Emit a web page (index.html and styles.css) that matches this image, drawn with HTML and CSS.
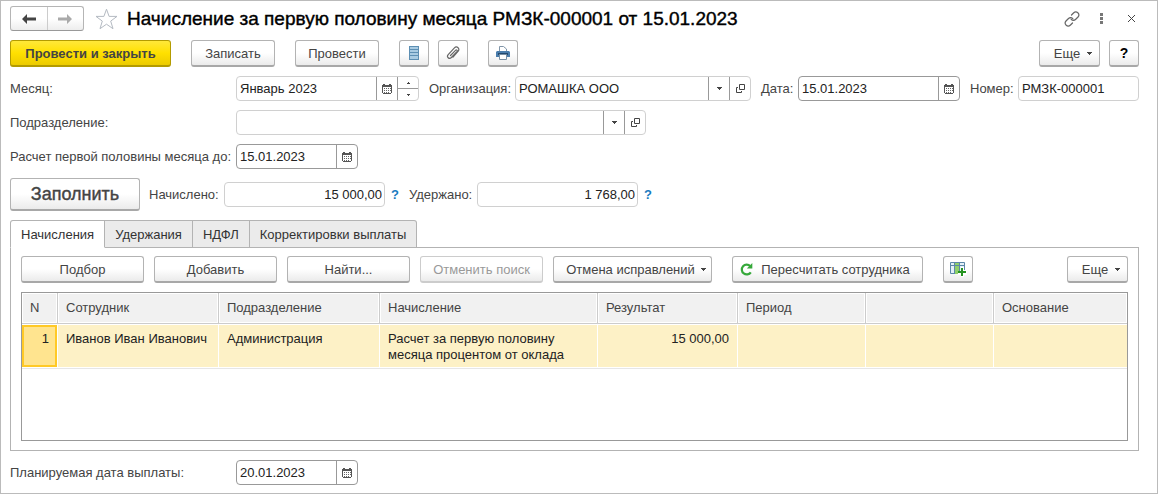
FILE: index.html
```html
<!DOCTYPE html>
<html lang="ru">
  <head>
    <meta charset="UTF-8" />
    <meta name="viewport" content="width=device-width, initial-scale=1.0" />
    <title>Начисление за первую половину месяца</title>
    <link rel="stylesheet" href="styles.css">
  </head>
  <body>
    <svg class="sprite" width="0" height="0" aria-hidden="true">
      <symbol id="calendar" viewBox="0 0 10 10">
        <path d="M0 1h1v-1h2v1h4v-1h2v1h1v8h-1v1h-8v-1h-1z" fill="#555" />
        <path d="M1 3h8v6h-8z" fill="#fff" />
        <path d="M2 4h1v1h-1zM4 4h1v1h-1zM6 4h1v1h-1zM2 6h1v1h-1zM4 6h1v1h-1zM6 6h1v1h-1zM2 8h1v1h-1zM4 8h1v1h-1zM6 8h1v1h-1zM8 4h1v1h-1zM8 6h1v1h-1z" fill="#666" />
      </symbol>
      <symbol id="open" viewBox="0 0 9 9">
        <path d="M3.500 .5h5v5h-5zM2 3.500h-1.500v5h5v-1.500" fill="none" stroke="#444" />
      </symbol>
      <symbol id="caret" viewBox="0 0 5 3">
        <path d="M0 0h5v1h-1v1h-1v1h-1v-1h-1v-1h-1z" fill="#444" />
      </symbol>
    </svg>

    <main class="window">
      <header class="title-bar">
        <div class="history">
          <button type="button" aria-label="Назад">
            <svg width="14" height="10" viewBox="0 0 14 10"><path d="M0 5l5-5v3.500h9v3h-9v3.500z" fill="#444" /></svg>
          </button>
          <button type="button" aria-label="Вперед">
            <svg width="14" height="10" viewBox="0 0 14 10"><path d="M14 5l-5-5v3.500h-9v3h9v3.500z" fill="#aaa" /></svg>
          </button>
        </div>
        <button type="button" class="icon-button" aria-label="В избранное">
          <svg width="23" height="22" viewBox="0 0 23 22"><path d="M11.500 1.200l2.600 7.200h7.900l-6.300 4.700 2.300 7.600-6.500-4.500-6.500 4.500 2.300-7.600-6.300-4.700h7.900z" fill="none" stroke="#b4bac2" /></svg>
        </button>
        <h1>Начисление за первую половину месяца РМЗК-000001 от 15.01.2023</h1>
        <div class="window-actions">
          <button type="button" class="icon-button icon-link" aria-label="Получить ссылку">
            <svg width="16" height="16" viewBox="0 0 16 16" fill="none" stroke="#666" stroke-width="1.200" stroke-linecap="round"><path d="M7.500 4l2-2c3-3 7 1 4.500 4l-2.500 2.500c-1.500 1.500-3.500 1.200-4.500-.5" /><path d="M8.500 12l-2 2c-3 3-7-1-4.500-4l2.500-2.500c1.500-1.500 3.500-1.200 4.500.5" /></svg>
          </button>
          <button type="button" class="icon-button" aria-label="Меню">
            <svg width="3" height="11" viewBox="0 0 3 11"><path d="M0 0h3v3h-3zM0 4h3v3h-3zM0 8h3v3h-3z" fill="#777" /></svg>
          </button>
          <button type="button" class="icon-button" aria-label="Закрыть">
            <svg width="7" height="7" viewBox="0 0 7 7"><path d="M0 0l7 7M7 0l-7 7" stroke="#444" /></svg>
          </button>
        </div>
      </header>

      <div class="commands">
        <button type="button" class="btn btn-primary">Провести и закрыть</button>
        <button type="button" class="btn btn-save">Записать</button>
        <button type="button" class="btn btn-save">Провести</button>
        <div class="btn-pair">
          <button type="button" class="btn btn-icon" aria-label="Движения документа">
            <svg width="10" height="14" viewBox="0 0 10 14"><path d="M0 0h10v14h-10z" fill="#5d8fb3" /><path d="M1 1h8v2h-8zM1 4h8v2h-8zM1 7h8v2h-8zM1 10h8v3h-8z" fill="#a9cbe2" /></svg>
          </button>
          <button type="button" class="btn btn-icon" aria-label="Присоединенные файлы">
            <svg width="14" height="14" viewBox="0 0 14 14"><path d="M4.500 9.500l5-5.200c1-1 2.300.2 1.400 1.300l-5.500 5.900c-2.300 2.200-5.200-.6-3.200-2.900l6-6.500c2.700-2.700 6.300.5 3.800 3.300l-5 5.600" fill="none" stroke="#666" stroke-width="1.200" stroke-linecap="round" /></svg>
          </button>
        </div>
        <button type="button" class="btn btn-icon" aria-label="Печать">
          <svg width="14" height="14" viewBox="0 0 14 14"><path d="M3.500 5.500v-5h4l3 2.500v2.500" fill="#fff" stroke="#8095a8" /><path d="M1 5h12l1 1v5h-14v-5z" fill="#4a7dac" /><path d="M2 7h10v2h-10z" fill="#23496f" /><path d="M3.500 8.500h7v5h-7z" fill="#fff" stroke="#7890a5" /></svg>
        </button>
        <button type="button" class="btn btn-more push">Еще <svg width="5" height="3"><use href="#caret" /></svg></button>
        <button type="button" class="btn btn-icon btn-help">?</button>
      </div>

      <form class="fields">
        <div class="row row-main">
          <label for="month">Месяц:</label>
          <div class="field">
            <input type="text" id="month" value="Январь 2023" />
            <button type="button" aria-label="Выбрать месяц"><svg width="10" height="10"><use href="#calendar" /></svg></button>
            <div class="spinner">
              <button type="button" aria-label="Следующий месяц"><svg width="3" height="2" viewBox="0 0 3 2"><path d="M1 0h1v1h1v1h-3v-1h1z" fill="#444" /></svg></button>
              <button type="button" aria-label="Предыдущий месяц"><svg width="3" height="2" viewBox="0 0 3 2"><path d="M0 0h3v1h-1v1h-1v-1h-1z" fill="#444" /></svg></button>
            </div>
          </div>
          <label for="company" class="label-inner">Организация:</label>
          <div class="field">
            <input type="text" id="company" value="РОМАШКА ООО" />
            <button type="button" aria-label="Выбрать организацию"><svg width="5" height="3"><use href="#caret" /></svg></button>
            <button type="button" aria-label="Открыть организацию"><svg width="9" height="9"><use href="#open" /></svg></button>
          </div>
          <label for="docDate" class="label-inner">Дата:</label>
          <div class="field field-strong">
            <input type="text" id="docDate" value="15.01.2023" />
            <button type="button" aria-label="Выбрать дату"><svg width="10" height="10"><use href="#calendar" /></svg></button>
          </div>
          <label for="docNumber" class="label-inner">Номер:</label>
          <div class="field">
            <input type="text" id="docNumber" value="РМЗК-000001" />
          </div>
        </div>

        <div class="row">
          <label for="department">Подразделение:</label>
          <div class="field field-wide">
            <input type="text" id="department" />
            <button type="button" aria-label="Выбрать подразделение"><svg width="5" height="3"><use href="#caret" /></svg></button>
            <button type="button" aria-label="Открыть подразделение"><svg width="9" height="9"><use href="#open" /></svg></button>
          </div>
        </div>

        <div class="row">
          <label for="calcDate">Расчет первой половины месяца до:</label>
          <div class="field field-strong field-date">
            <input type="text" id="calcDate" value="15.01.2023" />
            <button type="button" aria-label="Выбрать дату"><svg width="10" height="10"><use href="#calendar" /></svg></button>
          </div>
        </div>

        <div class="totals">
          <button type="button" class="btn btn-fill">Заполнить</button>
          <label for="accrued">Начислено:</label>
          <div class="field field-sum"><input type="text" id="accrued" value="15 000,00" /></div>
          <a href="#" class="hint">?</a>
          <label for="withheld">Удержано:</label>
          <div class="field field-sum"><input type="text" id="withheld" value="1 768,00" /></div>
          <a href="#" class="hint">?</a>
        </div>
      </form>

      <div class="tabs" role="tablist">
        <button type="button" role="tab" class="tab active" aria-selected="true">Начисления</button>
        <button type="button" role="tab" class="tab">Удержания</button>
        <button type="button" role="tab" class="tab">НДФЛ</button>
        <button type="button" role="tab" class="tab">Корректировки выплаты</button>
      </div>

      <section class="panel">
        <div class="toolbar">
          <button type="button" class="btn btn-tool">Подбор</button>
          <button type="button" class="btn btn-tool">Добавить</button>
          <button type="button" class="btn btn-tool">Найти...</button>
          <button type="button" class="btn btn-tool" disabled>Отменить поиск</button>
          <button type="button" class="btn btn-undo">Отмена исправлений <svg width="5" height="3"><use href="#caret" /></svg></button>
          <button type="button" class="btn btn-recalc">
            <svg width="13" height="13" viewBox="0 0 13 13"><path d="M10.800 9.300a4.900 4.900 0 1 1-.6-6.200" fill="none" stroke="#35a83a" stroke-width="2.200" /><path d="M12.300 0v5.500h-5.500z" fill="#35a83a" /></svg>
            Пересчитать сотрудника
          </button>
          <button type="button" class="btn btn-icon" aria-label="Настройка колонок">
            <svg width="17" height="15" viewBox="0 0 17 15"><path d="M.5.500h14v11h-14z" fill="#e4f0f8" stroke="#5b87a8" /><path d="M5 1h4v11h-4z" fill="#8fcf6a" /><path d="M0 3.500h15M4.500 0v12M9.500 0v12" stroke="#5b87a8" fill="none" /><path d="M11 5h3v3h3v5h-3v2h-3v-2h-3v-4h3z" fill="#fff" /><path d="M12 6v8M8 10h8" stroke="#259320" stroke-width="2" /></svg>
          </button>
          <button type="button" class="btn btn-more push">Еще <svg width="5" height="3"><use href="#caret" /></svg></button>
        </div>

        <div class="table-box">
          <table>
            <colgroup>
              <col class="col-n" />
              <col class="col-name" />
              <col class="col-name" />
              <col class="col-accrual" />
              <col class="col-result" />
              <col class="col-period" />
              <col class="col-period" />
              <col />
            </colgroup>
            <thead>
              <tr>
                <th>N</th>
                <th>Сотрудник</th>
                <th>Подразделение</th>
                <th>Начисление</th>
                <th>Результат</th>
                <th>Период</th>
                <th></th>
                <th>Основание</th>
              </tr>
            </thead>
            <tbody>
              <tr>
                <td class="num current">1</td>
                <td>Иванов Иван Иванович</td>
                <td>Администрация</td>
                <td>Расчет за первую половину месяца процентом от оклада</td>
                <td class="num">15 000,00</td>
                <td></td>
                <td></td>
                <td></td>
              </tr>
            </tbody>
          </table>
        </div>
      </section>

      <div class="row">
        <label for="payDate">Планируемая дата выплаты:</label>
        <div class="field field-strong field-date">
          <input type="text" id="payDate" value="20.01.2023" />
          <button type="button" aria-label="Выбрать дату"><svg width="10" height="10"><use href="#calendar" /></svg></button>
        </div>
      </div>
    </main>
  </body>
</html>
```
FILE: styles.css
```css
* {
  box-sizing: border-box;
}

body {
  margin: 0;
  background-color: #fff;
  color: #444;
}

body,
button,
input {
  font-family: "Liberation Sans", Arial, sans-serif;
  font-size: 13px;
}

button {
  padding: 0;
  border: 0;
  background: none;
  color: inherit;
}

.sprite {
  position: absolute;
}

.window {
  display: flex;
  flex-direction: column;
  min-height: 100vh;
  padding: 5px 18px 8px 9px;
  border: 1px solid #bbb;
}

/* title */
.title-bar {
  display: flex;
  align-items: center;
  height: 25px;
}

.history {
  display: flex;
  width: 74px;
  height: 25px;
  margin-right: 11px;
  border: 1px solid #b5b5b5;
  border-bottom-color: #999;
  border-radius: 3px;
  background: linear-gradient(#fff 50%, #ededed);
}

.history button {
  display: flex;
  flex: 1;
  align-items: center;
  justify-content: center;
}

.history button + button {
  border-left: 1px solid #ccc;
}

.icon-button {
  display: flex;
  align-items: center;
}

h1 {
  margin: 0 0 0 9px;
  color: #000;
  font-size: 19px;
  font-weight: normal;
  white-space: nowrap;
  -webkit-text-stroke: 0.4px #000;
}

.window-actions {
  display: flex;
  align-items: center;
  gap: 25px;
  margin-left: auto;
  padding-right: 4px;
}

.icon-link {
  margin-right: -5px;
}

/* buttons */
.btn {
  display: flex;
  align-items: center;
  justify-content: center;
  height: 27px;
  border: 1px solid #b3b3b3;
  border-bottom: 2px solid #a8a8a8;
  border-radius: 3px;
  background: linear-gradient(#fff 50%, #ebebeb);
  white-space: nowrap;
}

.btn:disabled {
  border-color: #ccc;
  color: #999;
}

.btn-primary {
  width: 161px;
  border-color: #b39b00;
  background: linear-gradient(#ffe83a, #ffe000 50%, #eccb00);
  font-weight: bold;
}

.btn-save {
  width: 84px;
}

.btn-icon {
  width: 30px;
}

.btn-more {
  gap: 7px;
  width: 61px;
  padding-left: 7px;
}

.btn-help {
  margin-left: -11px;
  color: #000;
  font-size: 14px;
  font-weight: bold;
}

.btn-fill {
  width: 130px;
  height: 33px;
  font-size: 18px;
  -webkit-text-stroke: 0.4px #444;
}

.btn-tool {
  width: 123px;
}

.btn-undo {
  gap: 6px;
  width: 159px;
  padding-left: 7px;
}

.btn-recalc {
  gap: 8px;
  width: 191px;
  margin: 0 10px;
  padding-right: 5px;
}

.push {
  margin-left: auto;
}

.commands {
  display: flex;
  gap: 20px;
  margin: 9px 0;
}

.btn-pair {
  display: flex;
  gap: 9px;
}

/* fields */
.fields {
  display: flex;
  flex-direction: column;
  gap: 9px;
}

.row {
  display: grid;
  grid-template-columns: 226px 1fr;
  align-items: center;
}

.row-main {
  grid-template-columns: 226px 183px 96px 1fr 47px 162px 58px 121px;
}

.label-inner {
  padding-left: 10px;
}

.field {
  display: flex;
  height: 25px;
  border: 1px solid #d0d0d0;
  border-radius: 4px;
  background-color: #fff;
}

.field-strong {
  border-color: #999;
}

.field-wide {
  width: 410px;
}

.field-date {
  width: 122px;
}

.field-sum {
  width: 161px;
}

.field input {
  flex: 1;
  width: 100%;
  min-width: 0;
  padding: 0 3px;
  border: 0;
  background: none;
  color: #222;
}

.field-sum input {
  padding-right: 2px;
  text-align: right;
}

.field > button,
.spinner {
  display: flex;
  flex: none;
  align-items: center;
  justify-content: center;
  width: 21px;
  border-left: 1px solid #999;
}

.spinner {
  flex-direction: column;
  align-items: stretch;
}

.spinner button {
  display: flex;
  flex: 1;
  align-items: center;
  justify-content: center;
}

.spinner button + button {
  border-top: 1px solid #999;
}

.totals {
  display: flex;
  align-items: center;
}

.totals label {
  width: 84px;
  padding-left: 9px;
}

.totals .hint + label {
  width: 79px;
  padding-left: 11px;
}

.hint {
  width: 13px;
  padding-left: 6px;
  color: #1a7bbf;
  font-weight: bold;
  text-decoration: none;
}

/* tabs, above the panel so that the active one joins it */
.tabs {
  position: relative;
  display: flex;
  margin-top: 9px;
}

.tab {
  height: 28px;
  padding: 0 10px;
  border: 1px solid #b3b3b3;
  border-left-width: 0;
  background-color: #ebebeb;
  color: #333;
}

.tab:first-child {
  border-left-width: 1px;
  border-top-left-radius: 3px;
}

.tab:last-child {
  border-top-right-radius: 3px;
}

.tab.active {
  border-bottom-color: #fff;
  background-color: #fff;
}

.panel {
  display: flex;
  flex: 1;
  flex-direction: column;
  margin: -1px 0 9px;
  padding: 8px 10px 9px;
  border: 1px solid #b3b3b3;
}

.toolbar {
  display: flex;
  gap: 10px;
  margin-bottom: 9px;
}

.table-box {
  flex: 1;
  min-height: 149px;
  border: 1px solid #999;
}

table {
  width: 100%;
  border-bottom: 1px solid #e6e6e6;
  border-collapse: separate;
  border-spacing: 0;
  table-layout: fixed;
}

th,
td {
  padding: 6px 8px;
  line-height: 16px;
  text-align: left;
  vertical-align: top;
}

th {
  height: 31px;
  padding-top: 7px;
  border-right: 1px solid #ccc;
  border-bottom: 1px solid #ccc;
  background-color: #f1f1f1;
  box-shadow: inset 0 0 0 1px #fff;
  font-weight: normal;
}

td {
  height: 44px;
  padding-bottom: 4px;
  border: solid #fff;
  border-width: 1px 1px 1px 0;
  background-color: #fdf1c6;
  color: #222;
}

th:last-child,
td:last-child {
  border-right: 0;
}

.num {
  text-align: right;
}

.current {
  background-color: #ffe48f;
  background-clip: padding-box;
  box-shadow: inset 0 0 0 2px #ffc926;
}

.col-n {
  width: 36px;
}

.col-name {
  width: 161px;
}

.col-accrual {
  width: 218px;
}

.col-result {
  width: 140px;
}

.col-period {
  width: 128px;
}
```
